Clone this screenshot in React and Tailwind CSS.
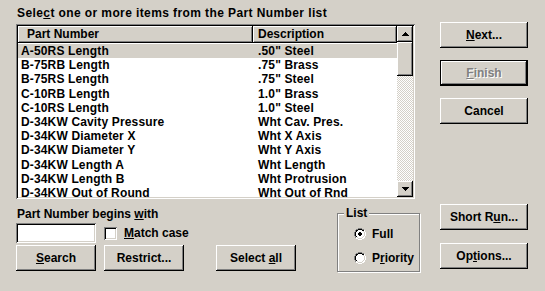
import React from 'react';

const raised =
    'bg-[#d4d0c8] shadow-[inset_-1px_-1px_#000,inset_1px_1px_#fff,inset_-2px_-2px_#808080,inset_2px_2px_#d4d0c8]';
const sunken =
    'shadow-[inset_1px_1px_#808080,inset_-1px_-1px_#fff,inset_2px_2px_#000,inset_-2px_-2px_#d4d0c8]';

const rows = [
    ['A-50RS Length', '.50" Steel'],
    ['B-75RB Length', '.75" Brass'],
    ['B-75RS Length', '.75" Steel'],
    ['C-10RB Length', '1.0" Brass'],
    ['C-10RS Length', '1.0" Steel'],
    ['D-34KW Cavity Pressure', 'Wht Cav. Pres.'],
    ['D-34KW Diameter X', 'Wht X Axis'],
    ['D-34KW Diameter Y', 'Wht Y Axis'],
    ['D-34KW Length A', 'Wht Length'],
    ['D-34KW Length B', 'Wht Protrusion'],
    ['D-34KW Out of Round', 'Wht Out of Rnd'],
];

const Btn = ({ children, className = '', disabled, isDefault }) => (
    <div
        className={`h-[26px] flex items-center justify-center text-[12px] font-bold ${
            isDefault
                ? 'bg-[#d4d0c8] shadow-[inset_0_0_0_1px_#000,inset_-2px_-2px_#000,inset_2px_2px_#fff,inset_-3px_-3px_#808080]'
                : raised
        } ${disabled ? 'text-[#808080] [text-shadow:1px_1px_0_#fff]' : 'text-black'} ${className}`}
    >
        <span>{children}</span>
    </div>
);

const Arrow = ({ up }) => (
    <svg width="7" height="4" viewBox="0 0 7 4">
        {up ? <path d="M3 0h1v1h1v1h1v1h1v1H0V3h1V2h1V1h1z" fill="#000" /> : <path d="M0 0h7v1H6v1H5v1H4v1H3V3H2V2H1V1H0z" fill="#000" />}
    </svg>
);

const Radio = ({ checked }) => (
    <svg width="12" height="12" viewBox="0 0 12 12">
        <path d="M4 0h4v1h2v1h1v2h1v4h-1v2h-1v1H8v1H4v-1H2v-1H1V8H0V4h1V2h1V1h2z" fill="#fff" />
        <path d="M4 0h4v1H4zM2 1h2v1H2zM8 1h2v1H8zM1 2h1v2H1zM0 4h1v4H0zM1 8h1v2H1z" fill="#808080" />
        <path d="M4 1h4v1H4zM2 2h2v1H2zM8 2h2v1H8zM2 3h1v1H2zM1 4h1v4H1zM2 8h1v1H2z" fill="#000" />
        <path d="M10 2h1v2h-1zM11 4h1v4h-1zM10 8h1v2h-1zM8 10h2v1H8zM4 11h4v1H4zM2 10h2v1H2z" fill="#fff" />
        <path d="M9 3h1v1H9zM10 4h1v4h-1zM9 8h1v1H9zM8 9h1v1H8zM4 10h4v1H4zM3 9h1v1H3z" fill="#d4d0c8" />
        {checked && <path d="M5 4h2v1h1v2H7v1H5V7H4V5h1z" fill="#000" />}
    </svg>
);

const App = () => {
    return (
        <div
            className="w-[545px] h-[291px] bg-[#d4d0c8] text-black flex overflow-hidden"
            style={{ fontFamily: '"Liberation Sans", Arial, sans-serif' }}
        >
            {/* Left side */}
            <div className="w-[420px] pl-[16px] flex flex-col">
                <div className="h-[24px] pt-[6px] pl-[1px] text-[12px] font-bold leading-[14px] tracking-[0.4px]">
                    Sele<span className="underline">c</span>t one or more items from the Part Number list
                </div>

                {/* List box */}
                <div className={`w-[399px] h-[175px] p-[2px] bg-white ${sunken} flex`}>
                    <div className="flex-1 flex flex-col overflow-hidden">
                        <div className="flex h-[17px] shrink-0 text-[12px] font-bold leading-[15px]">
                            <div className={`w-[235px] pl-[9px] pt-[1px] ${raised}`}>Part Number</div>
                            <div className={`flex-1 pl-[5px] pt-[1px] ${raised}`}>Description</div>
                        </div>
                        <div className="flex flex-col pt-[1px]">
                            {rows.map((r, i) => (
                                <div
                                    key={i}
                                    className={`flex h-[14.2px] shrink-0 text-[12px] font-bold leading-[14px] tracking-[0.15px] ${
                                        i === 0 ? 'bg-[#d4d0c8]' : ''
                                    }`}
                                >
                                    <div className="w-[235px] pl-[3px]">{r[0]}</div>
                                    <div className="flex-1 pl-[5px]">{r[1]}</div>
                                </div>
                            ))}
                        </div>
                    </div>

                    {/* Scrollbar */}
                    <div className="w-[16px] flex flex-col">
                        <div className={`h-[16px] flex items-center justify-center ${raised}`}>
                            <Arrow up />
                        </div>
                        <div className={`h-[34px] ${raised}`} />
                        <div className="flex-1 bg-[repeating-conic-gradient(#d4d0c8_0_25%,#fff_0_50%)] bg-[length:2px_2px]" />
                        <div className={`h-[16px] flex items-center justify-center ${raised}`}>
                            <Arrow />
                        </div>
                    </div>
                </div>

                {/* Bottom controls */}
                <div className="flex mt-[8px]">
                    <div className="flex flex-col">
                        <div className="pl-[1px] text-[12px] font-bold leading-[14px]">
                            Part Number begins <span className="underline">w</span>ith
                        </div>
                        <div className="flex items-center mt-[2px]">
                            <div className={`w-[80px] h-[20px] bg-white ${sunken}`} />
                            <div className={`ml-[8px] w-[13px] h-[13px] bg-white ${sunken}`} />
                            <div className="ml-[7px] text-[12px] font-bold">
                                <span className="underline">M</span>atch case
                            </div>
                        </div>
                        <div className="flex mt-[2px]">
                            <Btn className="w-[80px]">
                                <span className="underline">S</span>earch
                            </Btn>
                            <Btn className="w-[80px] ml-[8px]">Restrict...</Btn>
                            <Btn className="w-[80px] ml-[32px]">
                                Select <span className="underline">a</span>ll
                            </Btn>
                        </div>
                    </div>

                    {/* Group box */}
                    <div className="ml-[41px] mt-[6px] w-[84px] h-[59px] relative border border-[#808080] shadow-[inset_1px_1px_#fff,1px_1px_#fff] flex flex-col pl-[16px] pt-[13px] gap-[10px]">
                        <div className="absolute -top-[8px] left-[6px] px-[2px] bg-[#d4d0c8] text-[12px] font-bold leading-[14px]">
                            List
                        </div>
                        <div className="flex items-center gap-[6px] text-[12px] font-bold leading-[14px]">
                            <Radio checked />
                            <span>Full</span>
                        </div>
                        <div className="flex items-center gap-[6px] text-[12px] font-bold leading-[14px]">
                            <Radio />
                            <span>
                                P<span className="underline">r</span>iority
                            </span>
                        </div>
                    </div>
                </div>
            </div>

            {/* Right buttons */}
            <div className="ml-[20px] w-[88px] flex flex-col pt-[22px]">
                <Btn>
                    <span className="underline">N</span>ext...
                </Btn>
                <Btn disabled isDefault className="mt-[12px]">
                    <span className="underline">F</span>inish
                </Btn>
                <Btn className="mt-[12px]">Cancel</Btn>
                <Btn className="mt-[80px]">
                    Short R<span className="underline">u</span>n...
                </Btn>
                <Btn className="mt-[13px]">
                    Op<span className="underline">t</span>ions...
                </Btn>
            </div>
        </div>
    );
};

export default App;
